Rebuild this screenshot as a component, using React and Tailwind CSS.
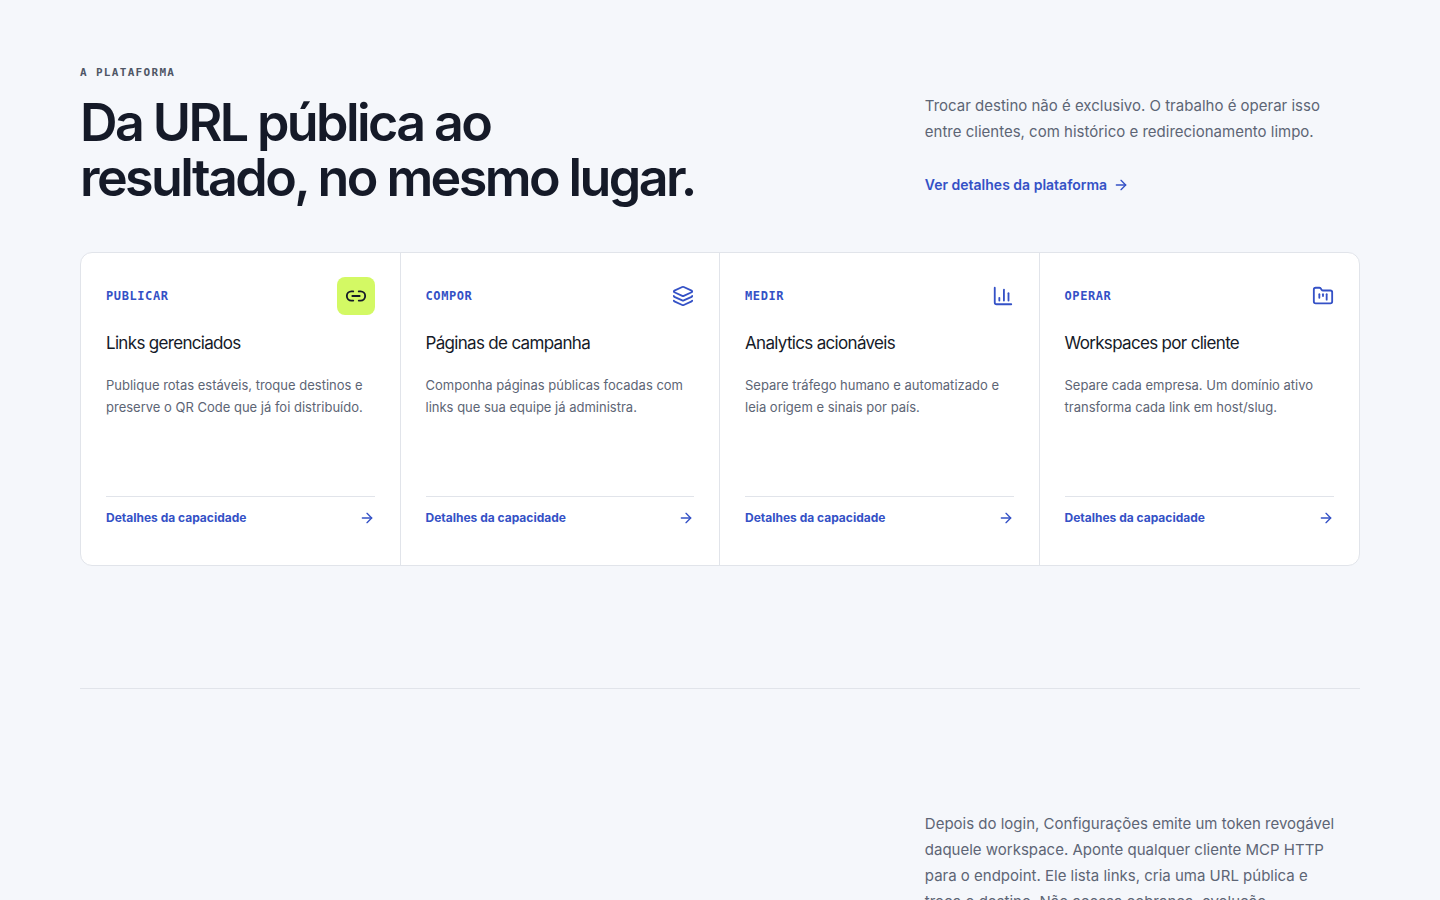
import { ArrowRight, ChartColumn, FolderKanban, Layers, Link2 } from "lucide-react";

const capabilities = [
  {
    label: "Publicar",
    title: "Links gerenciados",
    text: "Publique rotas estáveis, troque destinos e preserve o QR Code que já foi distribuído.",
    Icon: Link2,
    featured: true,
  },
  {
    label: "Compor",
    title: "Páginas de campanha",
    text: "Componha páginas públicas focadas com links que sua equipe já administra.",
    Icon: Layers,
  },
  {
    label: "Medir",
    title: "Analytics acionáveis",
    text: "Separe tráfego humano e automatizado e leia origem e sinais por país.",
    Icon: ChartColumn,
  },
  {
    label: "Operar",
    title: "Workspaces por cliente",
    text: "Separe cada empresa. Um domínio ativo transforma cada link em host/slug.",
    Icon: FolderKanban,
  },
];

function CapabilityCard({ label, title, text, Icon, featured }) {
  return (
    <article className="flex min-h-[312px] flex-col border-r border-[#e1e4ea] px-[25px] pt-6 pb-[26px] last:border-r-0">
      <div className="flex h-[38px] items-center justify-between">
        <span className="font-['DejaVu_Sans_Mono',monospace] text-xs font-bold tracking-wider text-[#3451c6] uppercase">
          {label}
        </span>
        {featured ? (
          <span className="grid size-[38px] place-items-center rounded-lg bg-[#d3f964] text-[#151a28]">
            <Icon size={22} aria-hidden="true" />
          </span>
        ) : (
          <Icon size={22} className="text-[#3451c6]" aria-hidden="true" />
        )}
      </div>
      <h3 className="mt-4 text-[17px] leading-6 tracking-[-0.04em] text-[#151a28]">{title}</h3>
      <p className="mt-[19px] text-[13px] leading-[22px] text-[#5d6575]">{text}</p>
      <a
        href="#capacidade"
        className="mt-auto flex h-[43px] items-center justify-between border-t border-[#e1e4ea] text-xs font-bold text-[#3451c6]"
      >
        Detalhes da capacidade
        <ArrowRight size={16} aria-hidden="true" />
      </a>
    </article>
  );
}

export default function App() {
  return (
    <main className="min-h-screen bg-[#f5f7fb] px-20 font-[Inter,sans-serif] text-[#151a28]">
      <section className="border-b border-[#e1e4ea] pt-[65px] pb-[122px]">
        <div className="flex items-end justify-between gap-16">
          <div>
            <p className="mb-[14px] font-['DejaVu_Sans_Mono',monospace] text-[11px] leading-4 font-bold tracking-[0.12em] text-[#4f5666] uppercase">
              A plataforma
            </p>
            <h2 className="text-[52px] leading-[55px] font-semibold tracking-tighter">
              Da URL pública ao
              <br />
              resultado, no mesmo lugar.
            </h2>
          </div>
          <div className="w-[34%] shrink-0">
            <p className="text-[15px] leading-[26px] text-[#5d6575]">
              Trocar destino não é exclusivo. O trabalho é operar isso entre clientes, com histórico e
              redirecionamento limpo.
            </p>
            <a
              href="#plataforma"
              className="mt-5 inline-flex h-10 items-center gap-1.5 align-top text-sm font-semibold text-[#3451c6]"
            >
              Ver detalhes da plataforma
              <ArrowRight size={16} aria-hidden="true" />
            </a>
          </div>
        </div>
        <div className="mt-[47px] grid grid-cols-4 overflow-hidden rounded-xl border border-[#e1e4ea] bg-white">
          {capabilities.map((item) => (
            <CapabilityCard key={item.label} {...item} />
          ))}
        </div>
      </section>
      <section className="flex justify-end pt-[122px]">
        <p className="w-[34%] pr-4 text-[15px] leading-[26px] text-[#5d6575]">
          Depois do login, Configurações emite um token revogável daquele workspace. Aponte qualquer
          cliente MCP HTTP para o endpoint. Ele lista links, cria uma URL pública e troca o destino. Não
          acessa cobrança, evolução
        </p>
      </section>
    </main>
  );
}
